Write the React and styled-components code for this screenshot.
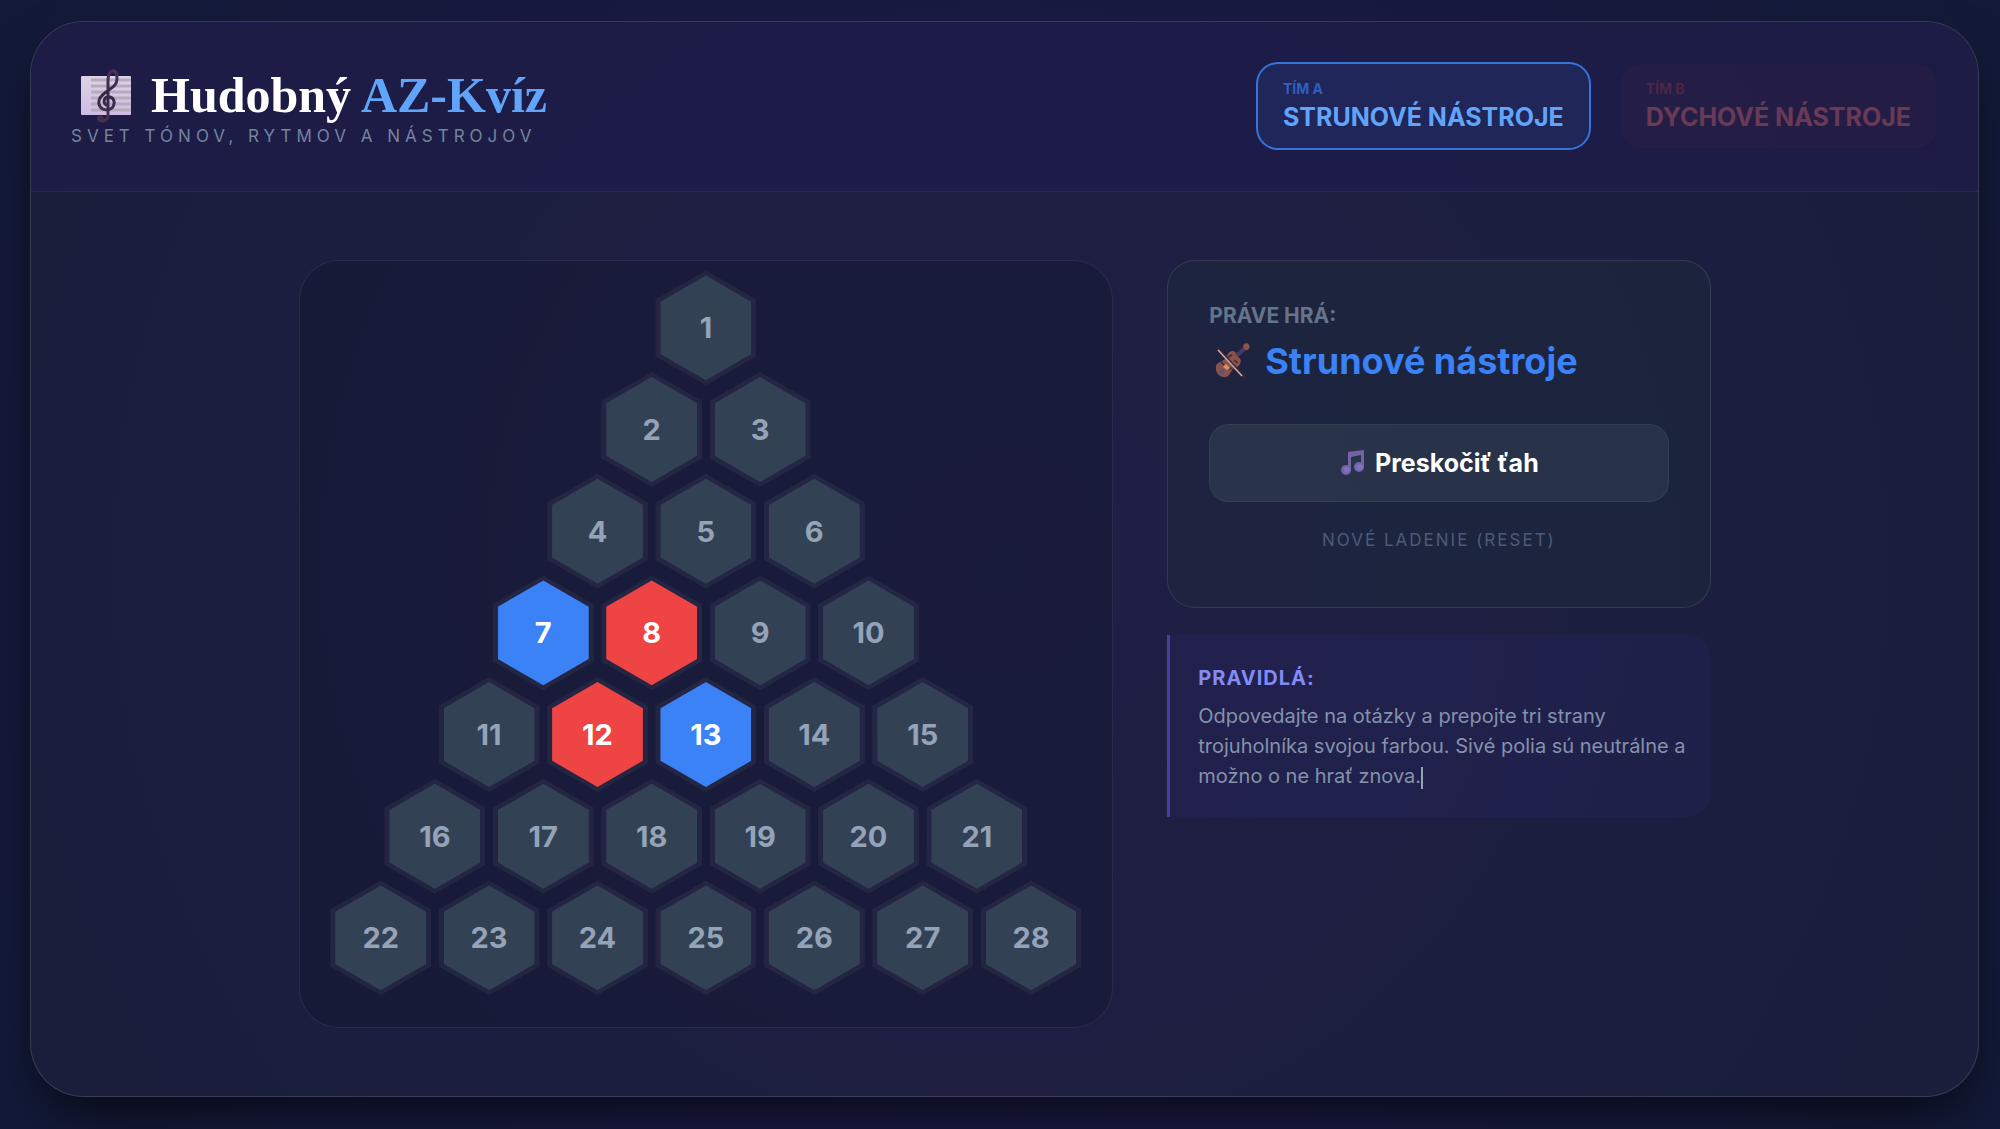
import React, { useState } from "react";
import styled, { createGlobalStyle } from "styled-components";

const ROWS = 7;
const START = { 7: "a", 8: "b", 12: "b", 13: "a" };

const fills = { a: "#3b82f6", b: "#ef4444", none: "#334155" };

const teams = {
	a: { label: "Tím A", name: "Strunové nástroje", text: "#60a5fa", rgb: "59, 130, 246" },
	b: { label: "Tím B", name: "Dychové nástroje", text: "#f87171", rgb: "239, 68, 68" },
};

// number, row and starting half-column of every field in the triangle
const fields = [];
for (let row = 1; row <= ROWS; row++) {
	for (let i = 0; i < row; i++) {
		fields.push({ id: fields.length + 1, row, col: ROWS - row + 1 + i * 2 });
	}
}

const ScoreIcon = () => (
	<svg width='68' height='56' viewBox='0 0 68 56' aria-hidden='true'>
		<defs>
			<linearGradient id='paper' x1='0' y1='0' x2='0' y2='1'>
				<stop offset='0' stopColor='#ddd3e8' />
				<stop offset='1' stopColor='#cfbbe3' />
			</linearGradient>
			<linearGradient id='clef' x1='0' y1='0' x2='0' y2='1'>
				<stop offset='0' stopColor='#4d3158' />
				<stop offset='0.5' stopColor='#35284a' />
				<stop offset='1' stopColor='#49304f' />
			</linearGradient>
		</defs>
		<rect x='10' y='9' width='50' height='39' rx='1' fill='url(#paper)' />
		<path d='M20 13h40M20 19h40M20 25h40M20 31h40M20 37h40M20 43h40' stroke='#b5abbc' strokeWidth='3' />
		<path
			d='M31 51c-2-3-5 0-3 2 3 2 9 1 9-5V14c0-6 2-10 5-10 4 0 4 4 4 8 0 7-6 9-11 13-5 4-8 7-7 12 1 5 6 7 11 5 5-2 6-10 0-12-5-1-8 4-4 8'
			fill='none'
			stroke='url(#clef)'
			strokeWidth='3'
			strokeLinecap='round'
		/>
	</svg>
);

const ViolinIcon = () => (
	<svg width='44' height='40' viewBox='0 0 44 40' aria-hidden='true'>
		<path d='M22 20L36 7' stroke='#493968' strokeWidth='4' />
		<path d='M34 5c0-3 5-4 6-1 2 3-1 6-4 5z' fill='#8d5549' />
		<path d='M7 25c1-4 6-4 9-7 2-3 3-8 8-8 3 0 3 4 5 6 2 1 4 3 2 7-2 4-6 3-8 6-2 4-4 8-9 7-5-1-8-6-7-11z' fill='#8a5449' />
		<path d='M10 30l3-3 3 4-2 3c-2 0-3-2-4-4z' fill='#62507f' />
		<path d='M19 16l4-2M20 28l5-2M12 21l3 3M25 19l4 3' stroke='#4e3038' strokeWidth='2' />
		<path d='M14 26l3-3 4 4-3 2z' fill='#d49465' />
		<path d='M9 8l27 29' stroke='#3a2933' strokeWidth='3' />
		<path d='M9 9l24 26' stroke='#d5aaa4' strokeWidth='1.500' />
	</svg>
);

const NotesIcon = () => (
	<svg width='28' height='28' viewBox='0 0 28 28' aria-hidden='true'>
		<path d='M9 3l16-2v18h-3V6L12 8v14H9z' fill='#7463a3' />
		<circle cx='7' cy='21' r='5' fill='#7462ad' />
		<circle cx='20' cy='18' r='5' fill='#7462ad' />
		<circle cx='8' cy='21' r='3' fill='#8071bd' />
		<circle cx='21' cy='18' r='3' fill='#8071bd' />
	</svg>
);

const Team = ({ team, active }) => (
	<TeamCard $rgb={team.rgb} $active={active}>
		<TeamLabel $rgb={team.rgb}>{team.label}</TeamLabel>
		<TeamName $color={team.text}>{team.name}</TeamName>
	</TeamCard>
);

const App = () => {
	const [turn, setTurn] = useState("a");
	const [owners, setOwners] = useState(START);
	const other = turn === "a" ? "b" : "a";

	const claim = (id) => {
		if (owners[id]) return;
		setOwners({ ...owners, [id]: turn });
		setTurn(other);
	};

	return (
		<Page>
			<GlobalStyle />
			<Shell>
				<Header>
					<div>
						<Title>
							<ScoreIcon />
							<span>
								Hudobný <em>AZ-Kvíz</em>
							</span>
						</Title>
						<Subtitle>Svet tónov, rytmov a nástrojov</Subtitle>
					</div>
					<Teams>
						<Team team={teams.a} active={turn === "a"} />
						<Team team={teams.b} active={turn === "b"} />
					</Teams>
				</Header>
				<Content>
					<Board>
						<Triangle>
							{fields.map(({ id, row, col }) => (
								<Hex
									key={id}
									type='button'
									$row={row}
									$col={col}
									$owner={owners[id] || "none"}
									onClick={() => claim(id)}
								>
									<span>{id}</span>
								</Hex>
							))}
						</Triangle>
					</Board>
					<Side>
						<TurnCard>
							<TurnLabel>Práve hrá:</TurnLabel>
							<TurnName $color={fills[turn]}>
								<ViolinIcon />
								{teams[turn].name}
							</TurnName>
							<SkipButton type='button' onClick={() => setTurn(other)}>
								<NotesIcon />
								Preskočiť ťah
							</SkipButton>
							<ResetButton type='button' onClick={() => setOwners({})}>
								Nové ladenie (reset)
							</ResetButton>
						</TurnCard>
						<Rules>
							<h3>Pravidlá:</h3>
							<p>
								Odpovedajte na otázky a prepojte tri strany trojuholníka svojou
								farbou. Sivé polia sú neutrálne a možno o ne hrať znova.
								<Caret />
							</p>
						</Rules>
					</Side>
				</Content>
			</Shell>
		</Page>
	);
};

export default App;

const GlobalStyle = createGlobalStyle`
	* {
		box-sizing: border-box;
	}
	body {
		margin: 0;
		background: #13193a;
		color: #fff;
		font-family: "Inter", sans-serif;
	}
	h1, h2, h3, p {
		margin: 0;
	}
	button {
		font-family: inherit;
		border: none;
		padding: 0;
		cursor: pointer;
	}
`;

const Page = styled.div`
	min-height: 100vh;
	padding: 21px 21px 33px 30px;
	display: flex;
	background: radial-gradient(circle at center, #1e1b4b 0%, #131a38 100%);
`;

const Shell = styled.main`
	flex: 1;
	min-width: 0;
	overflow: hidden;
	border: 1px solid rgba(255, 255, 255, 0.13);
	border-radius: 54px;
	background: rgba(34, 38, 62, 0.4);
	box-shadow: 0 26px 52px -8px rgba(0, 0, 0, 0.6);
`;

const Header = styled.header`
	display: flex;
	flex-wrap: wrap;
	justify-content: space-between;
	align-items: flex-start;
	gap: 28px;
	padding: 40px 40px 41px;
	border-bottom: 1px solid rgba(255, 255, 255, 0.06);
	background: rgba(30, 27, 75, 0.7);
`;

const Title = styled.h1`
	display: flex;
	align-items: center;
	gap: 12px;
	height: 66px;
	font-family: "Liberation Serif", serif;
	font-size: 50px;
	line-height: 66px;
	em {
		color: #60a5fa;
		font-style: normal;
	}
`;

const Subtitle = styled.p`
	color: #75839d;
	font-size: 17px;
	line-height: 16px;
	letter-spacing: 5px;
	text-transform: uppercase;
`;

const Teams = styled.div`
	display: flex;
	flex-wrap: wrap;
	gap: 28px;
`;

const TeamCard = styled.div`
	padding: 15px 25px 13px;
	border: 2px solid ${(p) => (p.$active ? `rgba(${p.$rgb}, 0.85)` : "transparent")};
	border-radius: 22px;
	background: rgba(${(p) => p.$rgb}, 0.1);
	background-clip: padding-box;
	opacity: ${(p) => (p.$active ? 1 : 0.35)};
`;

const TeamLabel = styled.div`
	color: rgba(${(p) => p.$rgb}, 0.65);
	font-size: 14px;
	font-weight: 700;
	line-height: 20px;
	text-transform: uppercase;
`;

const TeamName = styled.div`
	color: ${(p) => p.$color};
	font-size: 25px;
	font-weight: 700;
	line-height: 36px;
	text-transform: uppercase;
`;

const Content = styled.div`
	display: grid;
	grid-template-columns: minmax(0, 3fr) minmax(0, 2fr);
	align-items: start;
	gap: 54px;
	max-width: 1412px;
	margin: 0 auto;
	padding: 68px 0;
`;

const Board = styled.section`
	padding: 16px 27px 38px;
	border: 1px solid rgba(255, 255, 255, 0.06);
	border-radius: 40px;
	background: rgba(17, 20, 44, 0.38);
	background-clip: padding-box;
`;

const Triangle = styled.div`
	display: grid;
	grid-template-columns: repeat(14, 1fr);
	grid-template-rows: repeat(7, minmax(0, 1fr));
	place-items: center;
	aspect-ratio: 758 / 711;
`;

const Hex = styled.button`
	grid-row: ${(p) => p.$row};
	grid-column: ${(p) => p.$col} / span 2;
	width: 93%;
	height: 113%;
	padding: 5px;
	clip-path: polygon(50% 0, 100% 25%, 100% 75%, 50% 100%, 0 75%, 0 25%);
	background: rgba(255, 255, 255, 0.05);
	span {
		display: flex;
		align-items: center;
		justify-content: center;
		height: 100%;
		clip-path: polygon(50% 0, 100% 25%, 100% 75%, 50% 100%, 0 75%, 0 25%);
		background: ${(p) => fills[p.$owner]};
		color: ${(p) => (p.$owner === "none" ? "#94a3b8" : "#fff")};
		font-size: 29px;
		font-weight: 700;
	}
`;

const Side = styled.aside`
	display: grid;
	gap: 27px;
`;

const TurnCard = styled.section`
	display: flex;
	flex-direction: column;
	padding: 41px 41px 55px;
	border: 1px solid rgba(255, 255, 255, 0.1);
	border-radius: 28px;
	background: rgba(30, 41, 59, 0.5);
`;

const TurnLabel = styled.p`
	margin-bottom: 4px;
	color: #64748b;
	font-size: 21px;
	font-weight: 700;
	line-height: 28px;
	text-transform: uppercase;
`;

const TurnName = styled.h2`
	display: flex;
	align-items: center;
	gap: 12px;
	margin-bottom: 36px;
	color: ${(p) => p.$color};
	font-size: 36px;
	font-weight: 700;
	line-height: 54px;
`;

const SkipButton = styled.button`
	display: flex;
	align-items: center;
	justify-content: center;
	gap: 8px;
	height: 78px;
	border: 1px solid rgba(255, 255, 255, 0.06);
	border-radius: 20px;
	background: rgba(51, 65, 85, 0.5);
	color: #fff;
	font-size: 25px;
	font-weight: 700;
`;

const ResetButton = styled.button`
	margin-top: 26px;
	background: none;
	color: #4d5b76;
	font-size: 17px;
	line-height: 24px;
	letter-spacing: 2px;
	text-transform: uppercase;
`;

const Rules = styled.section`
	padding: 28px 14px 26px 28px;
	border-left: 3px solid #4340a0;
	border-radius: 0 24px 24px 0;
	background: rgba(49, 46, 129, 0.18);
	h3 {
		margin-bottom: 8px;
		color: #818cf8;
		font-size: 20px;
		line-height: 30px;
		letter-spacing: 1px;
		text-transform: uppercase;
	}
	p {
		color: #8492aa;
		font-size: 20px;
		line-height: 30px;
	}
`;

const Caret = styled.span`
	display: inline-block;
	width: 2px;
	height: 22px;
	background: #94a3b8;
	vertical-align: middle;
`;
